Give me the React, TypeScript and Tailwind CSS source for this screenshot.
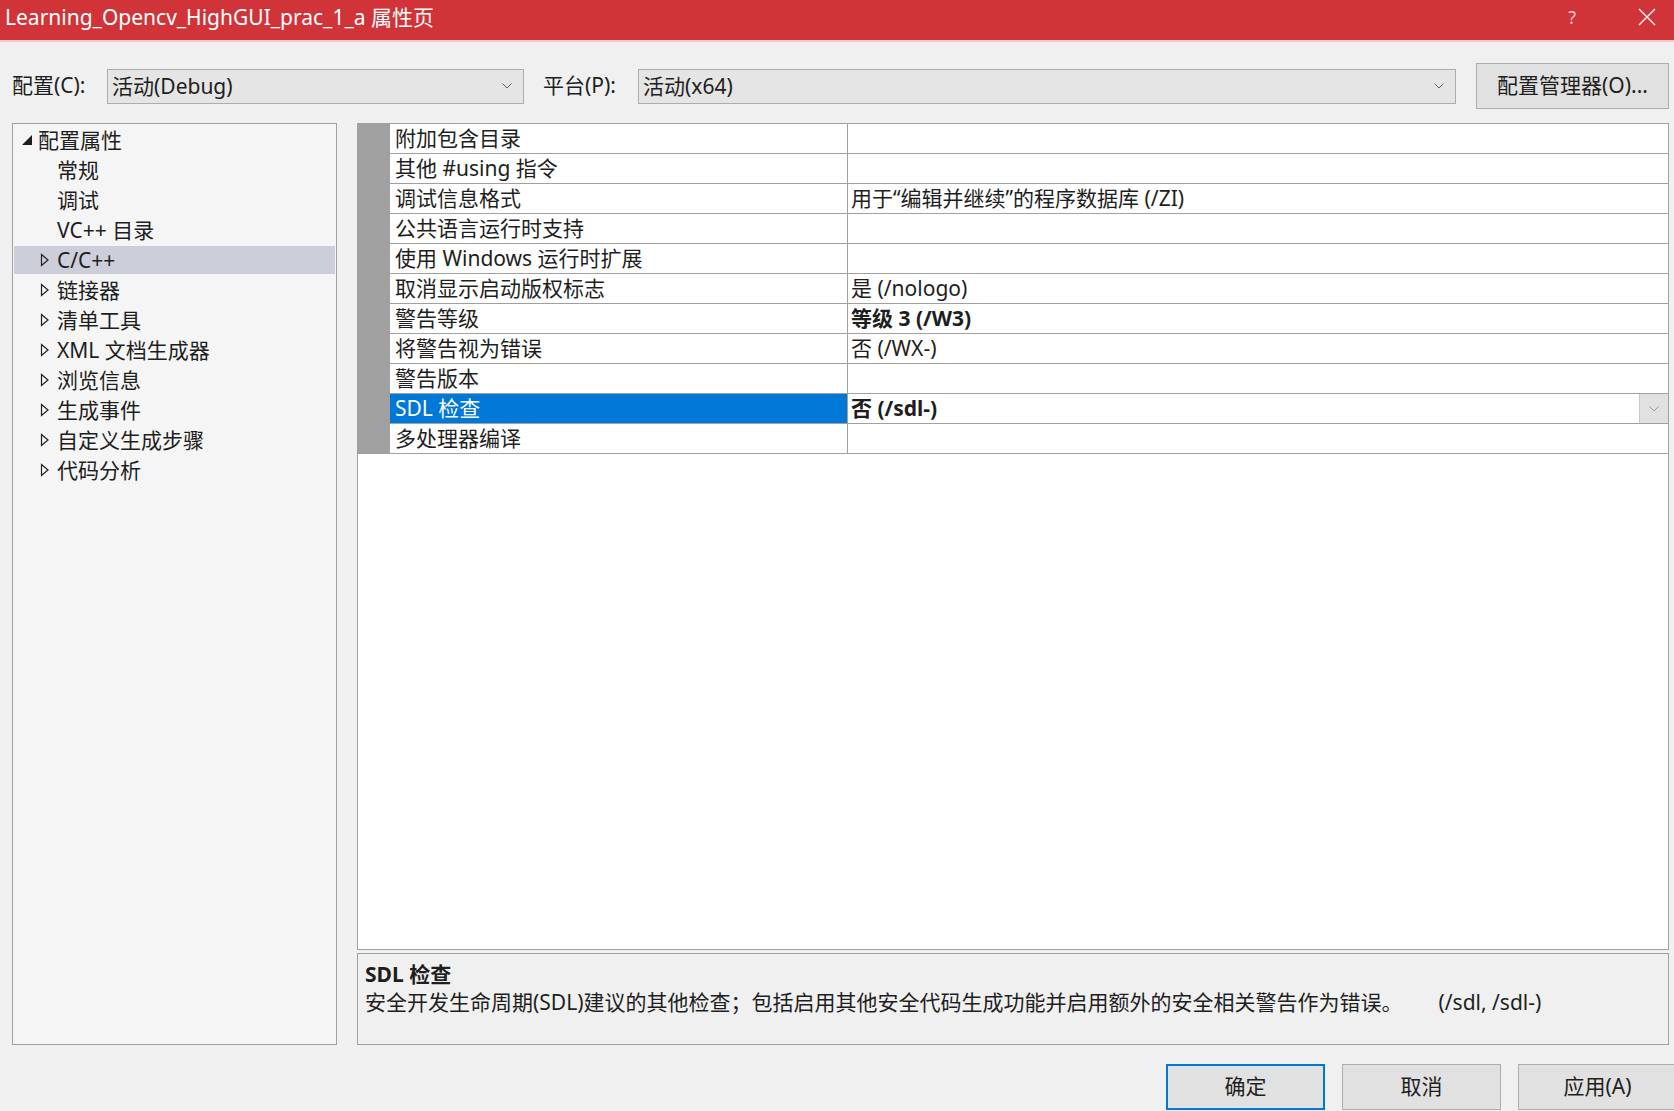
import React from "react"

const FONT = "font-['Noto_Sans','Noto_Sans_CJK_SC',sans-serif]"

interface PropRow {
    name: string
    value?: string
    bold?: boolean
}

const rows: PropRow[] = [
    { name: "附加包含目录" },
    { name: "其他 #using 指令" },
    { name: "调试信息格式", value: "用于“编辑并继续”的程序数据库 (/ZI)" },
    { name: "公共语言运行时支持" },
    { name: "使用 Windows 运行时扩展" },
    { name: "取消显示启动版权标志", value: "是 (/nologo)" },
    { name: "警告等级", value: "等级 3 (/W3)", bold: true },
    { name: "将警告视为错误", value: "否 (/WX-)" },
    { name: "警告版本" },
    { name: "SDL 检查", value: "否 (/sdl-)", bold: true },
    { name: "多处理器编译" },
]

const treeItems = ["链接器", "清单工具", "XML 文档生成器", "浏览信息", "生成事件", "自定义生成步骤", "代码分析"]

const Chevron = ({ color = "#606060" }: { color?: string }) => (
    <svg width="12" height="8" viewBox="0 0 12 8">
        <path d="M1.5 1.5 L6 6 L10.5 1.5" fill="none" stroke={color} strokeWidth="1" />
    </svg>
)

const OutlineTri = () => (
    <svg width="10" height="14" viewBox="0 0 10 14">
        <path d="M1.5 1.5 L8 7 L1.5 12.5 Z" fill="none" stroke="#1e1e1e" strokeWidth="1.2" />
    </svg>
)

const Combo = ({ text, width }: { text: string; width: string }) => (
    <div className={`${width} h-[35px] shrink-0 flex items-center justify-between bg-[#e5e5e5] border border-[#adadad] pl-[4px] pr-[10px]`}>
        <span className="text-[21px] leading-none text-[#1e1e1e]">{text}</span>
        <Chevron />
    </div>
)

const Button = ({ label, primary }: { label: string; primary?: boolean }) => (
    <div
        className={`w-[159px] h-[46px] shrink-0 flex items-center justify-center bg-[#e1e1e1] text-[21px] text-[#1e1e1e] ${
            primary ? "border-2 border-[#0078d7]" : "border border-[#adadad]"
        }`}
    >
        {label}
    </div>
)

export default function App() {
    return (
        <div className={`${FONT} w-[1674px] h-[1111px] overflow-hidden bg-[#f0f0f0] flex flex-col`}>
            {/* title bar */}
            <div className="h-[40px] shrink-0 bg-[#d13438] flex items-center justify-between pl-[5px] pr-[18px] pb-[6px] text-white">
                <span className="text-[21px] leading-none">Learning_Opencv_HighGUI_prac_1_a 属性页</span>
                <div className="flex items-center gap-[62px]">
                    <span className="text-[18px] leading-none text-[#f4c6c7]">?</span>
                    <svg width="18" height="18" viewBox="0 0 18 18">
                        <path d="M1 1 L17 17 M17 1 L1 17" stroke="#ffffff" strokeWidth="1.3" />
                    </svg>
                </div>
            </div>
            <div className="h-[2px] shrink-0 bg-[#f3c9ca]" />

            {/* config row */}
            <div className="flex items-center shrink-0 h-[46px] mt-[21px] mb-[14px] pl-[12px]">
                <span className="text-[21px] text-[#1e1e1e] w-[95px] shrink-0 whitespace-nowrap">配置(C):</span>
                <Combo text="活动(Debug)" width="w-[417px]" />
                <span className="text-[21px] text-[#1e1e1e] ml-[19px] w-[95px] shrink-0 whitespace-nowrap">平台(P):</span>
                <Combo text="活动(x64)" width="w-[818px]" />
                <div className="ml-[20px] w-[193px] h-[46px] shrink-0 flex items-center justify-center bg-[#e1e1e1] border border-[#adadad] text-[21px] text-[#1e1e1e] whitespace-nowrap">
                    配置管理器(O)...
                </div>
            </div>

            {/* main */}
            <div className="flex h-[922px] shrink-0 pl-[12px]">
                {/* tree */}
                <div className="w-[325px] h-full border border-[#a0a0a0] bg-[#f5f5f5] pt-[1px] text-[21px] text-[#1e1e1e]">
                    <div className="h-[30px] flex items-center">
                        <svg className="ml-[9px]" width="10" height="10" viewBox="0 0 10 10">
                            <path d="M10 0 L10 10 L0 10 Z" fill="#1e1e1e" />
                        </svg>
                        <span className="ml-[6px] leading-none">配置属性</span>
                    </div>
                    {["常规", "调试", "VC++ 目录"].map((t) => (
                        <div key={t} className="h-[30px] flex items-center pl-[44px]">
                            <span className="leading-none">{t}</span>
                        </div>
                    ))}
                    <div className="h-[28px] my-[1px] mx-[1px] flex items-center bg-[#ccceda] pl-[26px]">
                        <OutlineTri />
                        <span className="ml-[7px] leading-none">C/C++</span>
                    </div>
                    {treeItems.map((t) => (
                        <div key={t} className="h-[30px] flex items-center pl-[27px]">
                            <OutlineTri />
                            <span className="ml-[7px] leading-none">{t}</span>
                        </div>
                    ))}
                </div>

                {/* right side */}
                <div className="ml-[20px] w-[1312px] flex flex-col">
                    <div className="h-[827px] shrink-0 border border-[#a0a0a0] bg-white">
                        {rows.map((r) => {
                            const sel = r.name === "SDL 检查"
                            return (
                                <div key={r.name} className="flex h-[30px] border-b border-[#a0a0a0] text-[21px]">
                                    <div className="w-[32px] bg-[#a0a0a0]" />
                                    <div
                                        className={`w-[458px] border-r border-[#a0a0a0] pl-[5px] flex items-center leading-none ${
                                            sel ? "bg-[#0078d7] text-white" : "text-[#1e1e1e]"
                                        }`}
                                    >
                                        {r.name}
                                    </div>
                                    <div className={`flex-1 flex items-center justify-between pl-[3px] leading-none text-[#1e1e1e] ${r.bold ? "font-bold" : ""}`}>
                                        <span>{r.value ?? ""}</span>
                                        {sel && (
                                            <div className="w-[29px] h-full bg-[#e1e1e1] border-l border-[#c8c8c8] flex items-center justify-center">
                                                <Chevron color="#9a9a9a" />
                                            </div>
                                        )}
                                    </div>
                                </div>
                            )
                        })}
                    </div>
                    <div className="mt-[3px] h-[92px] shrink-0 border border-[#a0a0a0] bg-[#f0f0f0] px-[7px] pt-[6px] text-[21px] text-[#1e1e1e]">
                        <div className="font-bold leading-[28px]">SDL 检查</div>
                        <div className="leading-[28px] flex whitespace-nowrap">
                            <span>安全开发生命周期(SDL)建议的其他检查；包括启用其他安全代码生成功能并启用额外的安全相关警告作为错误。</span>
                            <span className="ml-[36px]">(/sdl, /sdl-)</span>
                        </div>
                    </div>
                </div>
            </div>

            {/* buttons */}
            <div className="flex shrink-0 justify-end gap-[17px] mt-[19px] mr-[-3px]">
                <Button label="确定" primary />
                <Button label="取消" />
                <Button label="应用(A)" />
            </div>
        </div>
    )
}
